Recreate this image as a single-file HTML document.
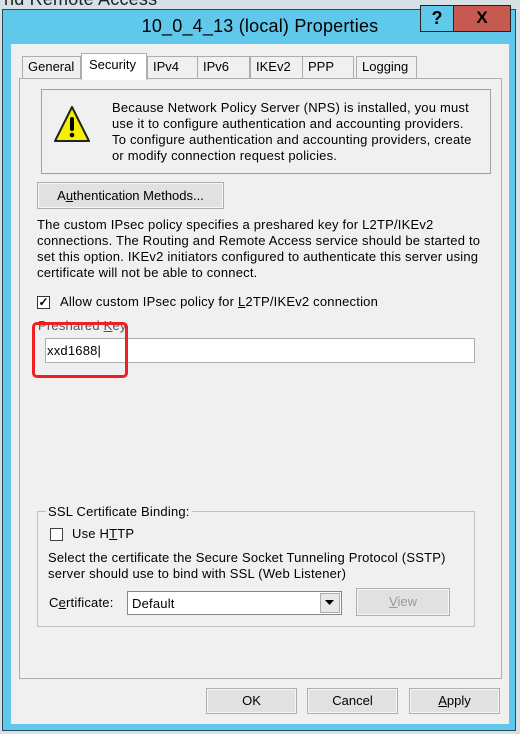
<!DOCTYPE html>
<html><head><style>
*{margin:0;padding:0;box-sizing:border-box}
body{width:520px;height:734px;background:#d7e0e5;position:relative;overflow:hidden;font-family:"Liberation Sans",sans-serif;font-size:13px;color:#000}
.a{position:absolute}
.t{position:absolute;white-space:nowrap;line-height:16px;letter-spacing:0.2px}
.btn{position:absolute;background:#e1e1e1;border:1px solid #adadad;box-shadow:inset 0 0 0 1px #f5f5f5;text-align:center}
.tab{position:absolute;top:56px;height:22px;background:#f0f0f0;border:1px solid #adadad;border-bottom:none;line-height:20px;padding-left:5px}
.cb{position:absolute;width:13px;height:13px;background:#fff;border:1px solid #333}
</style></head><body>
<div class="t" style="left:4px;top:-9px;font-size:18px;color:#222">nd Remote Access</div>
<div class="a" style="left:2px;top:9px;width:514px;height:722px;background:#60c8ea;border:1px solid #2b4a5a"></div>
<div class="t" style="left:0;width:520px;text-align:center;top:16px;font-size:18px;line-height:20px">10_0_4_13 (local) Properties</div>
<div class="a" style="left:420px;top:5px;width:34px;height:27px;border:1px solid #222;background:#60c8ea;text-align:center;font:bold 18px 'Liberation Sans';line-height:24px">?</div>
<div class="a" style="left:453px;top:5px;width:58px;height:27px;border:1px solid #222;background:#c75a50;text-align:center;font:bold 17px 'Liberation Sans';line-height:24px">X</div>
<div class="a" style="left:11px;top:44px;width:498px;height:680px;background:#f0f0f0"></div>
<div class="a" style="left:19px;top:78px;width:483px;height:601px;border:1px solid #adadad;background:#f0f0f0"></div>
<div class="tab" style="left:22px;width:59px">General</div>
<div class="tab" style="left:147px;width:51px">IPv4</div>
<div class="tab" style="left:197px;width:53px">IPv6</div>
<div class="tab" style="left:250px;width:53px">IKEv2</div>
<div class="tab" style="left:302px;width:52px">PPP</div>
<div class="tab" style="left:356px;width:61px">Logging</div>
<div class="tab" style="left:81px;top:53px;width:66px;height:27px;background:#fff;line-height:22px;padding-left:7px">Security</div>
<div class="a" style="left:41px;top:89px;width:450px;height:85px;border:1px solid #a0a0a0"></div>
<svg class="a" style="left:52px;top:104px" width="40" height="42"><polygon points="20,3 37,37 3,37" fill="#f5f000" stroke="#222" stroke-width="2" stroke-linejoin="round"/><rect x="18" y="13" width="4" height="14" rx="2"/><circle cx="20" cy="31" r="2.3"/></svg>
<div class="t" style="left:112px;top:100px">Because Network Policy Server (NPS) is installed, you must<br>use it to configure authentication and accounting providers.<br>To configure authentication and accounting providers, create<br>or modify connection request policies.</div>
<div class="btn" style="left:37px;top:182px;width:187px;height:27px;line-height:25px">A<u>u</u>thentication Methods...</div>
<div class="t" style="left:37px;top:217px">The custom IPsec policy specifies a preshared key for L2TP/IKEv2<br>connections. The Routing and Remote Access service should be started to<br>set this option. IKEv2 initiators configured to authenticate this server using<br>certificate will not be able to connect.</div>
<div class="cb" style="left:37px;top:296px;font-size:12px;line-height:11px;text-align:center;font-weight:bold">✓</div>
<div class="t" style="left:60px;top:294px">Allow custom IPsec policy for <u>L</u>2TP/IKEv2 connection</div>
<div class="t" style="left:38px;top:318px;color:#555">Preshared <u>K</u>ey</div>
<div class="a" style="left:45px;top:338px;width:430px;height:25px;background:#fff;border:1px solid #abadb3"></div>
<div class="t" style="left:47px;top:343px;font-size:13px">xxd1688|</div>
<div class="a" style="left:32px;top:322px;width:96px;height:56px;border:3px solid #f02020;border-radius:5px"></div>
<div class="a" style="left:37px;top:511px;width:438px;height:116px;border:1px solid #c0c0c0"></div>
<div class="t" style="left:46px;top:504px;background:#f0f0f0;padding:0 2px">SSL Certificate Binding:</div>
<div class="cb" style="left:50px;top:528px;border-color:#444"></div>
<div class="t" style="left:72px;top:526px">Use H<u>T</u>TP</div>
<div class="t" style="left:48px;top:550px">Select the certificate the Secure Socket Tunneling Protocol (SSTP)<br>server should use to bind with SSL (Web Listener)</div>
<div class="t" style="left:49px;top:595px">C<u>e</u>rtificate:</div>
<div class="a" style="left:127px;top:591px;width:215px;height:24px;background:#fff;border:1px solid #828790"></div>
<div class="t" style="left:132px;top:596px">Default</div>
<div class="a" style="left:320px;top:593px;width:20px;height:20px;background:#e8e8e8;border:1px solid #adadad"></div>
<svg class="a" style="left:325px;top:600px" width="10" height="6"><polygon points="0,0 9,0 4.5,5" fill="#000"/></svg>
<div class="btn" style="left:356px;top:588px;width:94px;height:28px;line-height:26px;color:#999"><u>V</u>iew</div>
<div class="btn" style="left:206px;top:688px;width:91px;height:26px;line-height:24px">OK</div>
<div class="btn" style="left:307px;top:688px;width:91px;height:26px;line-height:24px">Cancel</div>
<div class="btn" style="left:409px;top:688px;width:91px;height:26px;line-height:24px"><u>A</u>pply</div>
</body></html>
